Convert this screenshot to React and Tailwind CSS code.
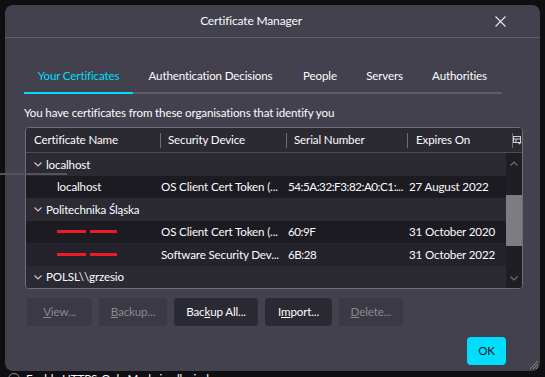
import React from 'react';

const rows = [
    { type: 'group', name: 'localhost' },
    { type: 'item', name: 'localhost', device: 'OS Client Cert Token (...', serial: '54:5A:32:F3:82:A0:C1:...', expires: '27 August 2022' },
    { type: 'group', name: 'Politechnika Śląska' },
    { type: 'item', redacted: true, device: 'OS Client Cert Token (...', serial: '60:9F', expires: '31 October 2020' },
    { type: 'item', redacted: true, device: 'Software Security Dev...', serial: '6B:28', expires: '31 October 2022' },
    { type: 'group', name: 'POLSL\\\\grzesio' },
];

const Chevron = ({ up = false, className = '' }) => (
    <svg width="8" height="5" viewBox="0 0 8 5" className={className}>
        <path d={up ? 'M0.5 4.5 L4 1 L7.5 4.5' : 'M0.5 0.5 L4 4 L7.5 0.5'} fill="none" stroke="currentColor" strokeWidth="1.2" />
    </svg>
);

const Btn = ({ w, children, disabled }) => (
    <div className={`${w} h-[28px] rounded-[4px] flex items-center justify-center ${disabled ? 'bg-[#3a3944] text-[#8a8991]' : 'bg-[#2b2a33] text-[#fbfbfe]'}`}>
        {children}
    </div>
);

const App = () => {
    return (
        <div className="relative w-[545px] h-[377px] overflow-hidden bg-[#0f0f12] pt-[5px] px-[5px] text-[11.6px] tracking-[-0.15px] text-[#fbfbfe] whitespace-nowrap" style={{ fontFamily: 'Lato, "Noto Sans", sans-serif' }}>
            {/* dialog window */}
            <div className="w-[535px] h-[366px] rounded-[8px] bg-[#42414d] flex flex-col relative">
                <div className="h-[33px] flex items-center border-b border-[#5f5e68] text-[12px]">
                    <div className="flex-1 text-center pl-[2px]">Certificate Manager</div>
                    <div className="w-[45px] h-full flex items-center">
                        <svg width="11" height="11" viewBox="0 0 11 11" className="text-[#e6e6ea]">
                            <path d="M0.5 0.5 L10.5 10.5 M10.5 0.5 L0.5 10.5" stroke="currentColor" strokeWidth="1.1" />
                        </svg>
                    </div>
                </div>

                <div className="pl-[19px] pr-[17px] flex flex-col">
                    {/* tabs */}
                    <div className="mt-[21px] w-[478px] flex border-b-2 border-[#5f5e68] h-[35px] text-[11.6px]">
                        <div className="w-[109px] flex items-center justify-center text-[#00ddff] border-b-2 border-[#00ddff] -mb-[2px]">Your Certificates</div>
                        <div className="w-[155px] flex items-center justify-center">Authentication Decisions</div>
                        <div className="w-[64px] flex items-center justify-center">People</div>
                        <div className="w-[65px] flex items-center justify-center">Servers</div>
                        <div className="w-[85px] flex items-center justify-center">Authorities</div>
                    </div>

                    <div className="mt-[10px] h-[18px] flex items-center">You have certificates from these organisations that identify you</div>

                    {/* table */}
                    <div className="mt-[5px] ml-[1px] w-[498px] border border-[#6f6e78] rounded-[4px] overflow-hidden bg-[#1c1b22]">
                        <div className="h-[25px] flex items-center bg-[#2b2a33] border-b border-[#4e4d56]">
                            <div className="w-[134px] pl-[8px]">Certificate Name</div>
                            <div className="w-[126px] pl-[7px] border-l border-[#6d6c75] h-[15px] flex items-center">Security Device</div>
                            <div className="w-[121px] pl-[7px] border-l border-[#6d6c75] h-[15px] flex items-center">Serial Number</div>
                            <div className="w-[105px] pl-[8px] border-l border-[#6d6c75] h-[15px] flex items-center">Expires On</div>
                            <div className="flex-1 border-l border-[#6d6c75] h-[15px] flex items-center justify-center">
                                <svg width="9" height="9" viewBox="0 0 9 9" className="text-[#d0d0d6]">
                                    <rect x="0.5" y="0.5" width="7" height="6" fill="none" stroke="currentColor" />
                                    <path d="M0.5 3 H7.5 M3 3 V6.5" stroke="currentColor" />
                                    <path d="M4 6 H9 L6.5 8.5 Z" fill="currentColor" />
                                </svg>
                            </div>
                        </div>
                        <div className="flex">
                            <div className="flex-1">
                                {rows.map((r, i) => (
                                    <div key={i} className={`h-[22.5px] flex items-center ${r.type === 'group' ? 'bg-[#2b2a33]' : i === 4 ? 'bg-[#24232b]' : 'bg-[#1c1b22]'}`}>
                                        {r.type === 'group' ? (
                                            <div className="flex items-center pl-[8px]">
                                                <Chevron className="text-[#c8c8d0] mr-[4px] mt-[1px]" />
                                                {r.name}
                                            </div>
                                        ) : (
                                            <>
                                                <div className="w-[135px] shrink-0 pl-[31px] flex items-center">
                                                    {r.redacted ? (
                                                        <>
                                                            <div className="w-[29px] h-[3px] bg-[#ed1c24]" />
                                                            <div className="w-[27px] h-[3px] bg-[#ed1c24] ml-[4px]" />
                                                        </>
                                                    ) : r.name}
                                                </div>
                                                <div className="w-[126px] shrink-0 overflow-hidden">{r.device}</div>
                                                <div className="w-[121px] shrink-0 overflow-hidden pl-[1px] tracking-[-0.45px]">{r.serial}</div>
                                                <div className="pl-[1px]">{r.expires}</div>
                                            </>
                                        )}
                                    </div>
                                ))}
                            </div>
                            {/* scrollbar */}
                            <div className="w-[16px] bg-[#1f1e25] flex flex-col items-center">
                                <div className="h-[20px] flex items-center justify-center text-[#6f6e76]"><Chevron up /></div>
                                <div className="h-[22px]" />
                                <div className="w-[16px] h-[51px] bg-[#7d7c82]" />
                                <div className="flex-1" />
                                <div className="h-[20px] flex items-center justify-center text-[#6f6e76]"><Chevron /></div>
                            </div>
                        </div>
                    </div>

                    {/* buttons */}
                    <div className="mt-[9px] ml-[3px] flex gap-[7px]">
                        <Btn w="w-[65px]" disabled><span><u>V</u>iew...</span></Btn>
                        <Btn w="w-[68px]" disabled><span><u>B</u>ackup...</span></Btn>
                        <Btn w="w-[84px]"><span>Bac<u>k</u>up All...</span></Btn>
                        <Btn w="w-[67px]"><span>I<u>m</u>port...</span></Btn>
                        <Btn w="w-[64px]" disabled><span><u>D</u>elete...</span></Btn>
                    </div>

                    <div className="mt-[11px] flex justify-end pr-[17px]">
                        <div className="w-[39px] h-[28px] rounded-[4px] bg-[#00ddff] text-[#15141a] flex items-center justify-center">OK</div>
                    </div>
                </div>

                {/* resize grip */}
                <svg width="11" height="11" viewBox="0 0 11 11" className="absolute right-[1px] bottom-[1px] text-[#8a8992]">
                    <path d="M10 2 L2 10 M10 5 L5 10 M10 8 L8 10" stroke="currentColor" strokeWidth="1" />
                </svg>
            </div>

            {/* page behind the dialog */}
            <div className="flex items-center gap-[6px] mt-[-1px] pl-[3px]">
                <div className="w-[12px] h-[12px] rounded-full border border-[#8f8f9d]" />
                <span>Enable HTTPS-Only Mode in all windows</span>
            </div>

            {/* stray line from the page behind */}
            <div className="absolute left-0 top-[173px] w-[67px] h-[2px] bg-[#55545d]" />
        </div>
    );
};

export default App;
